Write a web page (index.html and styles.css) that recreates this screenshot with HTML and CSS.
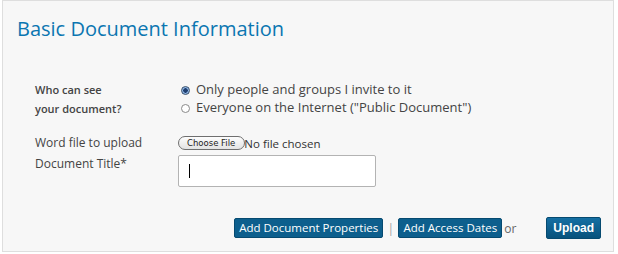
FILE: index.html
```html
<!DOCTYPE html>
<html lang="en">
<head>
    <meta charset="UTF-8">
    <title>Basic Document Information</title>
    <link rel="stylesheet" href="styles.css">
</head>
<body>
    <div class="panel">
        <h2 class="panel-title">Basic Document Information</h2>

        <div class="form">
            <div class="row row-access">
                <div class="label label-small">Who can see<br>your document?</div>
                <div class="field">
                    <label class="radio-line"><input type="radio" name="access" checked> Only people and groups I invite to it</label>
                    <label class="radio-line"><input type="radio" name="access"> Everyone on the Internet ("Public Document")</label>
                </div>
            </div>

            <div class="row row-file">
                <div class="label">Word file to upload</div>
                <div class="field">
                    <label class="file-button">Choose File<input type="file" class="file-input"></label><span class="file-name">No file chosen</span>
                </div>
            </div>

            <div class="row row-title">
                <div class="label">Document Title*</div>
                <div class="field">
                    <div class="text-wrap"><input type="text" class="text-input"></div>
                </div>
            </div>
        </div>

        <div class="actions">
            <button class="btn">Add Document Properties</button>
            <span class="sep">|</span>
            <button class="btn">Add Access Dates</button>
            <span class="or">or</span>
            <button class="btn btn-upload">Upload</button>
        </div>
    </div>
</body>
</html>
```

FILE: styles.css
```css
body {
    margin: 0;
    background: #fff;
    font-family: 'Open Sans', sans-serif;
    color: #444;
}

.panel {
    margin: 0 4px 0 2px;
    height: 252px;
    box-sizing: border-box;
    border: 1px solid #dedede;
    background: #f7f7f7;
    position: relative;
}

.panel-title {
    margin: 0;
    padding: 14px 0 0 14px;
    font-size: 20px;
    font-weight: 500;
    line-height: 28px;
    color: #0b76b1;
}

.form {
    padding: 37px 0 0 32px;
}

.row {
    display: flex;
}

.label {
    width: 143px;
    flex-shrink: 0;
    font-size: 12px;
    line-height: 20px;
    color: #444;
}

.label-small {
    font-size: 11px;
    font-weight: 600;
    line-height: 19px;
}

.radio-line {
    display: flex;
    align-items: center;
    font-size: 13px;
    line-height: 18px;
    color: #444;
}

.radio-line input {
    appearance: none;
    -webkit-appearance: none;
    width: 9px;
    height: 9px;
    margin: 3px 6px 0 3px;
    border: 1px solid #8a8a8a;
    border-radius: 50%;
    background: #fff;
    box-sizing: border-box;
}

.radio-line input:checked {
    border-color: #39506a;
    background: radial-gradient(circle, #1f3f70 0 2px, #8fb6e6 2.5px);
}

.row-file {
    margin-top: 15px;
}

.row-file .field {
    display: flex;
    align-items: center;
    font-size: 12px;
}

.file-button {
    display: inline-block;
    height: 12px;
    padding: 0 9px 0 8px;
    border: 1px solid #6f6f6f;
    border-radius: 7px;
    background: linear-gradient(#fdfdfd, #e3e3e3);
    font-family: 'DejaVu Sans', sans-serif;
    font-size: 8.5px;
    line-height: 12px;
    color: #222;
}

.file-input {
    display: none;
}

.file-name {
    font-size: 11.5px;
    color: #333;
    margin-left: -1px;
}

.row-title {
    margin-top: 2px;
}

.row-title .label {
    margin-top: -1px;
}

.text-wrap {
    position: relative;
}

.text-wrap::after {
    content: "";
    position: absolute;
    left: 11px;
    top: 9px;
    width: 1px;
    height: 14px;
    background: #000;
}

.text-input {
    display: block;
    width: 198px;
    height: 32px;
    box-sizing: border-box;
    border: 1px solid #b3b3b3;
    border-radius: 2px;
    background: #fff;
    outline: none;
}

.actions {
    position: absolute;
    right: 12px;
    bottom: 12px;
    display: flex;
    align-items: center;
}

.btn {
    height: 20px;
    padding: 0 4px;
    border: 1px solid #064a70;
    border-radius: 2px;
    background: #0d5f8d;
    color: #fff;
    font-family: 'Open Sans', sans-serif;
    font-size: 11.5px;
    line-height: 18px;
    cursor: pointer;
}

.sep {
    margin: 0 4px;
    color: #a8a8a8;
    font-size: 13px;
}

.or {
    margin: 0 30px 0 2px;
    color: #666;
    font-size: 12px;
}

.btn-upload {
    height: 22px;
    padding: 0 6px;
    background: linear-gradient(#156fa3, #08527c);
    font-family: 'Liberation Sans', sans-serif;
    font-weight: 700;
    font-size: 12px;
}
```
